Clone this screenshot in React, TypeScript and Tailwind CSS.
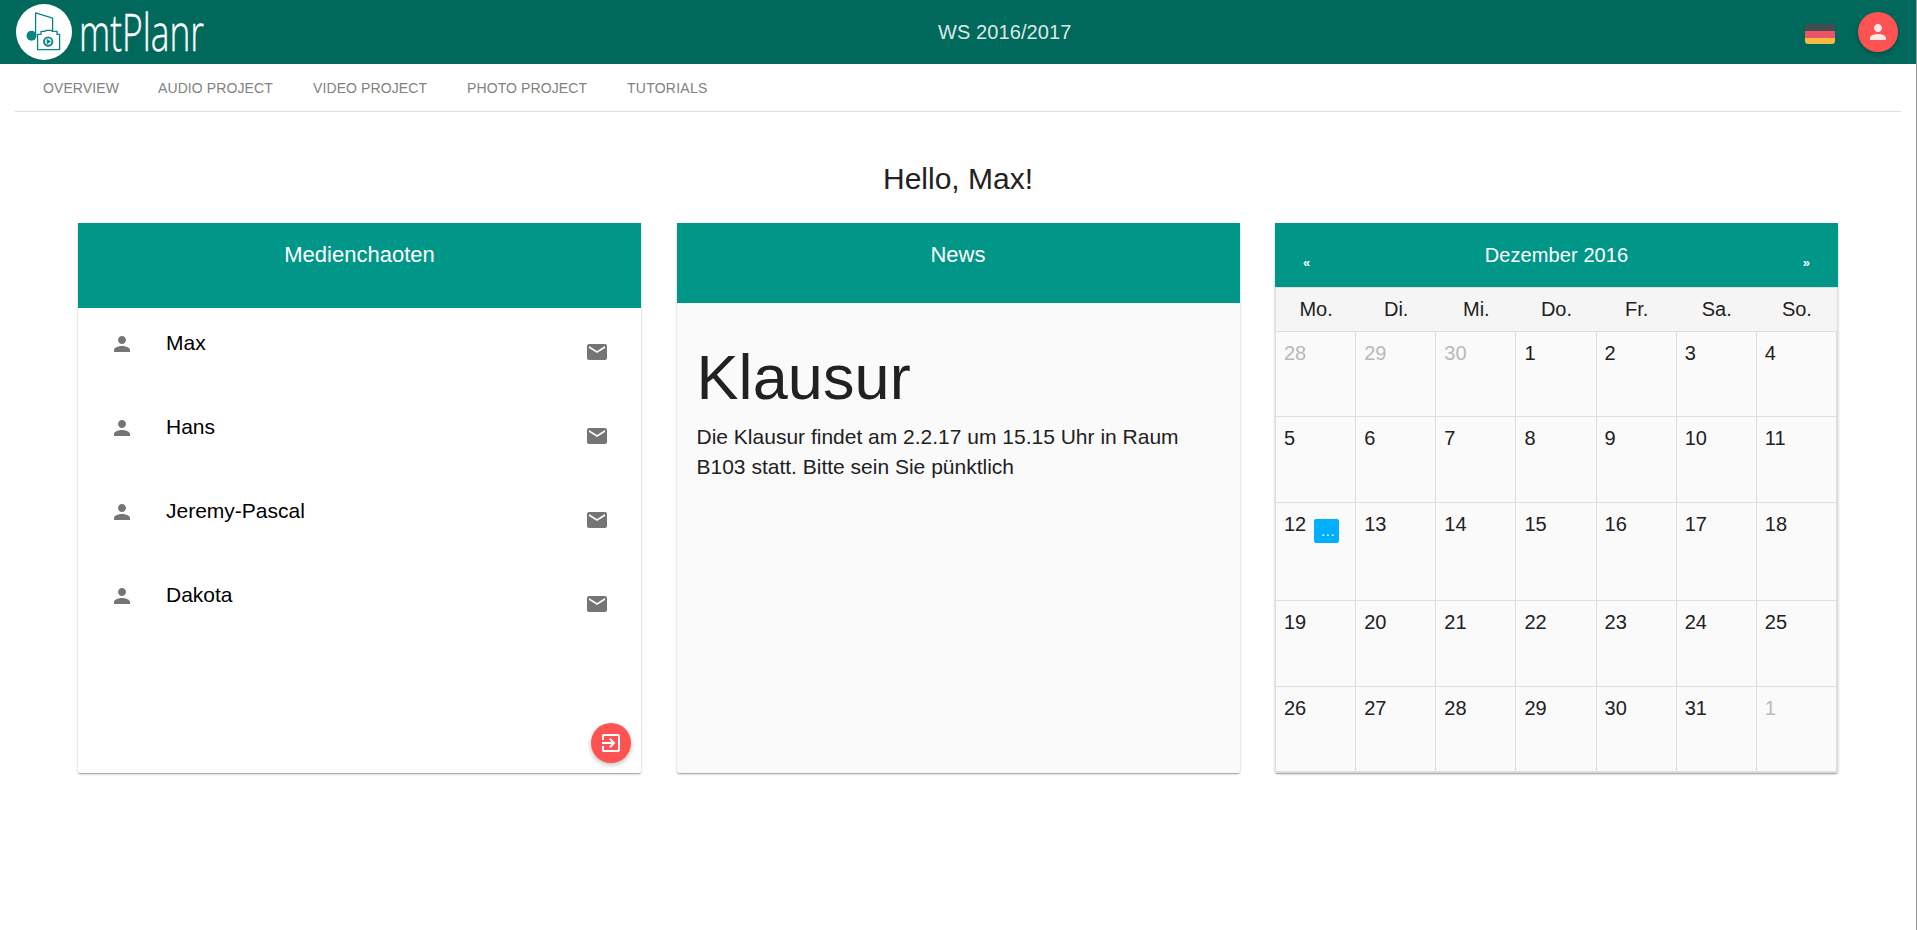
import React from "react";

const PERSON = "M12 12c2.21 0 4-1.79 4-4s-1.79-4-4-4-4 1.79-4 4 1.79 4 4 4zm0 2c-2.67 0-8 1.34-8 4v2h16v-2c0-2.66-5.33-4-8-4z";
const EMAIL = "M20 4H4c-1.1 0-1.99.9-1.99 2L2 18c0 1.1.9 2 2 2h16c1.1 0 2-.9 2-2V6c0-1.1-.9-2-2-2zm0 4l-8 5-8-5V6l8 5 8-5v2z";
const EXIT = "M10.09 15.59L11.5 17l5-5-5-5-1.41 1.41L12.67 11H3v2h9.67l-2.58 2.59zM19 3H5c-1.11 0-2 .9-2 2v4h2V5h14v14H5v-4H3v4c0 1.1.89 2 2 2h14c1.1 0 2-.9 2-2V5c0-1.1-.9-2-2-2z";

function Icon({ d, className }: { d: string; className: string }) {
  return (
    <svg viewBox="0 0 24 24" className={`size-6 shrink-0 ${className}`} fill="currentColor">
      <path d={d} />
    </svg>
  );
}

function Logo() {
  return (
    <svg width="210" height="64" viewBox="0 0 210 64" className="shrink-0 overflow-visible">
      <circle cx="44" cy="32" r="28" fill="#fff" />
      <g fill="none" stroke="#0b8580" strokeWidth="1.3" strokeLinejoin="round">
        <path d="M35.6 35.5V12.8l17 5.4v13" />
        <path d="M37.6 49.6V34.4h3.4v-3h3.8l1.4-1h5l1.4 1H57v3h2.6v15.2z" />
        <circle cx="48.2" cy="41.6" r="4.2" strokeWidth="1.9" />
      </g>
      <circle cx="31.5" cy="35.8" r="5" fill="#0b8580" />
      <path d="M46.7 38.8v5.6l4.4-2.8z" fill="#0b8580" />
      <text
        x="79"
        y="51"
        textLength="125"
        lengthAdjust="spacingAndGlyphs"
        fill="#fff"
        stroke="#fff"
        strokeWidth="0.4"
        className="font-['Open_Sans',sans-serif] text-[52px] font-light"
      >
        mtPlanr
      </text>
    </svg>
  );
}

const CARD = "h-[550px] w-[563px] rounded-[2px] shadow-[0_1px_3px_0_rgba(0,0,0,0.2),0_1px_1px_0_rgba(0,0,0,0.14),0_2px_1px_-1px_rgba(0,0,0,0.12)]";

const MEMBERS = ["Max", "Hans", "Jeremy-Pascal", "Dakota"];
const WEEKDAYS = ["Mo.", "Di.", "Mi.", "Do.", "Fr.", "Sa.", "So."];
const DAYS = [28, 29, 30, ...Array.from({ length: 31 }, (_, i) => i + 1), 1];

export default function App() {
  return (
    <div className="h-[930px] w-[1917px] overflow-hidden border-r border-[#999] bg-white font-['Liberation_Sans',Arial,sans-serif] text-[#212121]">
      <header className="flex h-16 items-center bg-[#00695c]">
        <Logo />
        <h1 className="ml-[728px] w-[136px] text-xl leading-6 tracking-[0.1px] whitespace-nowrap text-white/87">WS 2016/2017</h1>
        <div className="mr-[18px] ml-auto flex items-center gap-[23px]">
          <div className="mt-1 flex h-5 w-[30px] flex-col overflow-hidden rounded-[3px]">
            <div className="h-[7px] bg-[#464a53]" />
            <div className="h-[7px] bg-[#ec5565]" />
            <div className="h-1.5 bg-[#f6bb43]" />
          </div>
          <button className="grid size-10 place-items-center rounded-full bg-[#ff5252] shadow-[0_2px_5px_rgba(0,0,0,0.26)]">
            <Icon d={PERSON} className="text-white/87" />
          </button>
        </div>
      </header>

      <nav className="mx-[15px] flex h-12 items-center border-b border-[#e0e0e0] pl-7 text-sm tracking-[0.1px] whitespace-nowrap text-[#828282]">
        <a className="w-[115px]">OVERVIEW</a>
        <a className="w-[155px]">AUDIO PROJECT</a>
        <a className="w-[154px]">VIDEO PROJECT</a>
        <a className="w-[160px]">PHOTO PROJECT</a>
        <a className="tracking-[0.25px]">TUTORIALS</a>
      </nav>

      <h2 className="mt-[47px] text-center text-[30px] leading-10">Hello, Max!</h2>

      <main className="mt-6 flex gap-[35.5px] pl-[78px]">
        <section className={`${CARD} flex flex-col bg-white`}>
          <h3 className="h-[85px] bg-[#009688] pt-5 text-center text-[22px] leading-6 text-white">Medienchaoten</h3>
          <ul>
            {MEMBERS.map((name) => (
              <li key={name} className="flex h-[84px] items-start pr-8 pl-8 text-black">
                <Icon d={PERSON} className="mt-6 text-[#757575]" />
                <span className="mt-[23px] ml-8 flex-1 text-[21px] leading-6">{name}</span>
                <Icon d={EMAIL} className="mt-8 text-[#757575]" />
              </li>
            ))}
          </ul>
          <button className="mt-auto mr-2.5 mb-2.5 grid size-10 place-items-center self-end rounded-full bg-[#ff5252] shadow-[0_2px_5px_rgba(0,0,0,0.26)]">
            <Icon d={EXIT} className="text-white" />
          </button>
        </section>

        <section className={`${CARD} bg-[#fafafa]`}>
          <h3 className="h-20 bg-[#009688] pt-5 text-center text-[22px] leading-6 text-white">News</h3>
          <div className="px-5 pt-[38px]">
            <h4 className="text-[63px] leading-[72px] tracking-[0.1px]">Klausur</h4>
            <p className="mt-[9px] text-[21px] leading-[30px]">
              Die Klausur findet am 2.2.17 um 15.15 Uhr in Raum
              <br />
              B103 statt. Bitte sein Sie pünktlich
            </p>
          </div>
        </section>

        <section className={`${CARD} flex flex-col bg-[#fafafa]`}>
          <div className="flex h-16 justify-between bg-[#009688] px-7 text-white">
            <span className="mt-8 text-[13px] leading-4 font-bold">«</span>
            <h3 className="mt-5 text-xl leading-6 tracking-[0.1px]">Dezember 2016</h3>
            <span className="mt-8 text-[13px] leading-4 font-bold">»</span>
          </div>
          <div className="grid h-[45px] grid-cols-7 border border-[#ddd] bg-[#f5f5f5] text-center text-xl leading-[42px]">
            {WEEKDAYS.map((d) => (
              <span key={d}>{d}</span>
            ))}
          </div>
          <div className="grid flex-1 grid-cols-7 grid-rows-[85px_86px_98px_86px_85px] border-r border-b border-l border-[#ddd] text-xl">
            {DAYS.map((day, i) => (
              <div key={i} className={`flex items-start border-r border-b border-[#ddd] pl-2 ${i < 3 || i === 34 ? "text-[#b9b9b9]" : ""}`}>
                <span className="mt-[9px] leading-6">{day}</span>
                {day === 12 && (
                  <span className="mt-4 ml-2 flex h-6 w-[25px] justify-center rounded-[2px] bg-[#00b0ff] pl-0.5 text-[15px] leading-6 text-white">…</span>
                )}
              </div>
            ))}
          </div>
        </section>
      </main>
    </div>
  );
}
